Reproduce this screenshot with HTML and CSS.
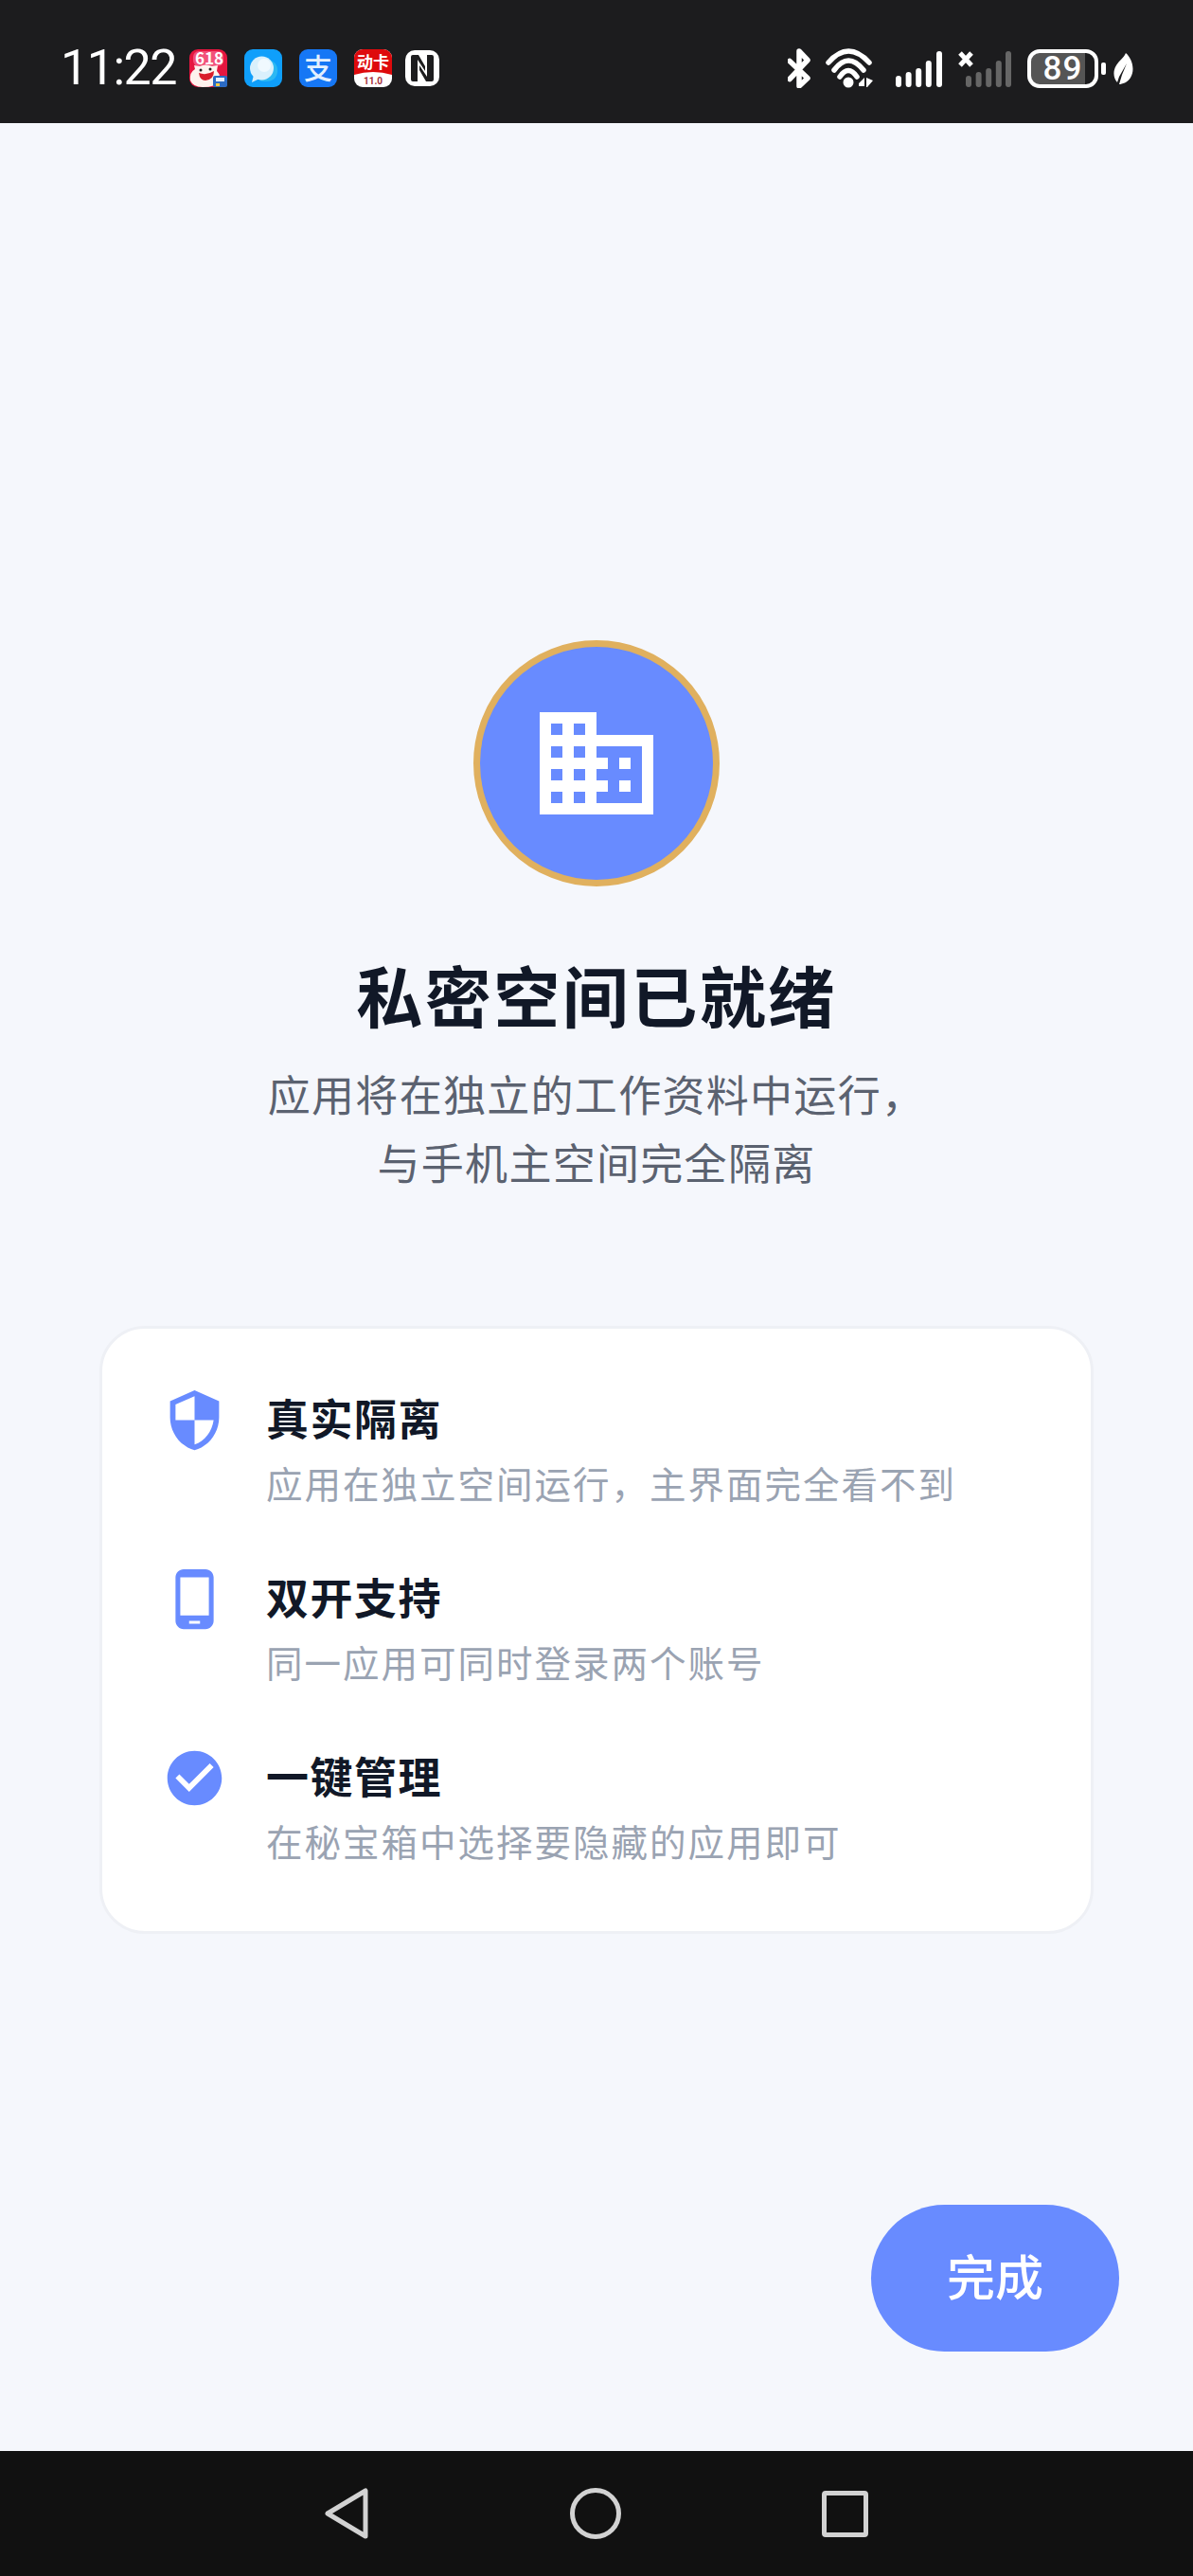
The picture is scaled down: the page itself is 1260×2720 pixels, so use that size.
FILE: index.html
```html
<!DOCTYPE html>
<html lang="zh-CN">

<head>
    <meta charset="UTF-8">
    <meta name="viewport" content="width=device-width, initial-scale=1.0">
    <title>私密空间已就绪</title>
    <link rel="stylesheet" href="styles.css">
</head>

<body>
    <!-- Status bar -->
    <header class="status-bar">
        <div class="status-left">
            <span class="clock">11:22</span>
            <svg class="app-icon" viewBox="0 0 40 40">
                <rect width="40" height="40" rx="9" fill="#e5163f" />
                <rect x="4" y="2" width="32" height="16" rx="6" fill="#f2527a" />
                <text x="21" y="16" class="icon-text" font-size="17" fill="#fff" text-anchor="middle">618</text>
                <path d="M1 33 Q0 24 6 21 L5 17 L11 18 Q17 15 24 18 L30 17 L29 23 Q34 28 31 34 Q28 40 14 40 Q4 40 1 33 Z" fill="#fdf3ee" />
                <path d="M10 25 Q18 28 26 23 Q26 32 17 33 Q11 33 10 25 Z" fill="#d91c2a" />
                <circle cx="12" cy="22" r="1.5" fill="#222" />
                <circle cx="22" cy="21" r="1.5" fill="#222" />
                <rect x="25" y="28" width="15" height="12" rx="2" fill="#2c6bc4" />
                <rect x="28" y="30" width="9" height="4" fill="#e8f0fb" />
                <rect x="28" y="36" width="4" height="3" fill="#f6c945" />
            </svg>
            <svg class="app-icon" viewBox="0 0 40 40">
                <rect width="40" height="40" rx="9" fill="#0f9ffb" />
                <path d="M22 10 Q36 12 35 24 Q34 34 22 34 Q18 34 16 33 Z" fill="#2cb8f3" />
                <path d="M8 35 L10 27 L16 31 Z" fill="#d6effc" />
                <circle cx="18.5" cy="20" r="12.5" fill="#d9f0fc" />
                <circle cx="21" cy="17" r="7" fill="#f0f9fe" />
            </svg>
            <svg class="app-icon" viewBox="0 0 40 40">
                <rect width="40" height="40" rx="9" fill="#1677f5" />
                <text x="20" y="31" class="icon-text-light" font-size="30" fill="#e3f0fe" text-anchor="middle">支</text>
            </svg>
            <svg class="app-icon" viewBox="0 0 40 40">
                <rect width="40" height="40" rx="9" fill="#fff" />
                <path d="M0 9a9 9 0 0 1 9-9h22a9 9 0 0 1 9 9v18q-20 -6-40 0z" fill="#de0a0c" />
                <text x="20" y="20" class="icon-text" font-size="17" fill="#fff" text-anchor="middle">动卡</text>
                <text x="20" y="37" class="icon-num" font-size="10" fill="#a5323c" text-anchor="middle">11.0</text>
            </svg>
            <svg class="nfc-icon" viewBox="0 0 36 38">
                <rect width="36" height="38" rx="10" fill="#fff" />
                <path d="M6 7 Q6 5 8 5 H14 L21 17 V22 L13 10 V33 H8 Q6 33 6 31 Z" fill="#1c1c1e" />
                <path d="M6 7 Q6 5 8 5 H14 L21 17 V22 L13 10 V33 H8 Q6 33 6 31 Z" fill="#1c1c1e" transform="rotate(180 18 19)" />
            </svg>
        </div>
        <div class="status-right">
            <svg class="bt-icon" viewBox="0 0 24 42">
                <path d="M2 13.5 L21 31.5 L12 40 V3 L21 12.5 L2 32.5" fill="none" stroke="#fff" stroke-width="5.5" stroke-linejoin="round" stroke-linecap="round" />
            </svg>
            <svg class="wifi-icon" viewBox="0 0 50 42">
                <g fill="none" stroke="#fff" stroke-width="5.5" stroke-linecap="round">
                    <path d="M3 15 Q24 -9 46 15" />
                    <path d="M9 23 Q24 3 40 23" />
                    <path d="M15 30 Q24 17 33 30" />
                </g>
                <circle cx="24" cy="36" r="5.5" fill="#fff" />
                <path d="M35 37 L41 31 V40 H35 Z M43 31 L50 34 L44 41 H43 Z" fill="#fff" />
            </svg>
            <svg class="signal-icon" viewBox="0 0 50 42">
                <g fill="#fff">
                    <rect x="0" y="29" width="6" height="12" rx="3" />
                    <rect x="10.6" y="25" width="6" height="16" rx="3" />
                    <rect x="21.2" y="21" width="6" height="20" rx="3" />
                    <rect x="31.8" y="13" width="6" height="28" rx="3" />
                    <rect x="43" y="3" width="6" height="38" rx="3" />
                </g>
            </svg>
            <svg class="signal-off-icon" viewBox="0 0 57 42">
                <g fill="#666">
                    <rect x="8" y="29" width="6" height="12" rx="3" />
                    <rect x="18.6" y="25" width="6" height="16" rx="3" />
                    <rect x="29.2" y="21" width="6" height="20" rx="3" />
                    <rect x="39.8" y="13" width="6" height="28" rx="3" />
                    <rect x="50" y="3" width="6" height="38" rx="3" />
                </g>
                <path d="M2 5 L14 18 M14 5 L2 18" stroke="#fff" stroke-width="5" />
            </svg>
            <div class="battery">
                <div class="battery-body">89</div>
                <div class="battery-nub"></div>
            </div>
            <svg class="leaf-icon" viewBox="0 0 21 33">
                <path d="M13 0 C20 6 23 18 18 26 C15 31 9 33 6 33 L9 23 L14 11 L6 25 L4 31 C0 27 -1 19 3 13 C6 8 11 5 13 0 Z" fill="#fff" />
            </svg>
        </div>
    </header>

    <!-- Main content -->
    <main class="page">
        <div class="hero-badge">
            <svg class="hero-icon" viewBox="0 0 24 24">
                <path d="M12 7V3H2v18h20V7H12zM6 19H4v-2h2v2zm0-4H4v-2h2v2zm0-4H4V9h2v2zm0-4H4V5h2v2zm4 12H8v-2h2v2zm0-4H8v-2h2v2zm0-4H8V9h2v2zm0-4H8V5h2v2zm10 12h-8v-2h2v-2h-2v-2h2v-2h-2V9h8v10zm-2-8h-2v2h2v-2zm0 4h-2v2h2v-2z" fill="#fff" />
            </svg>
        </div>
        <h1 class="title">私密空间已就绪</h1>
        <p class="subtitle">应用将在独立的工作资料中运行，<br>与手机主空间完全隔离</p>

        <section class="feature-card">
            <div class="feature-row">
                <svg class="feature-icon" viewBox="0 0 24 24">
                    <path d="M12 1L3 5v6c0 5.55 3.84 10.74 9 12 5.16-1.26 9-6.45 9-12V5l-9-4zm0 10.99h7c-.53 4.12-3.28 7.79-7 8.94V12H5V6.3l7-3.11v8.8z" />
                </svg>
                <div>
                    <h2 class="feature-title">真实隔离</h2>
                    <p class="feature-text">应用在独立空间运行，主界面完全看不到</p>
                </div>
            </div>
            <div class="feature-row">
                <svg class="feature-icon" viewBox="0 0 24 24">
                    <path d="M16 1H8C6.34 1 5 2.34 5 4v16c0 1.66 1.34 3 3 3h8c1.66 0 3-1.34 3-3V4c0-1.66-1.34-3-3-3zm-2 20h-4v-1h4v1zm3.25-3H6.75V4h10.5v14z" />
                </svg>
                <div>
                    <h2 class="feature-title">双开支持</h2>
                    <p class="feature-text">同一应用可同时登录两个账号</p>
                </div>
            </div>
            <div class="feature-row">
                <svg class="feature-icon" viewBox="0 0 24 24">
                    <path d="M12 2C6.48 2 2 6.48 2 12s4.48 10 10 10 10-4.48 10-10S17.52 2 12 2zm-2 15l-5-5 1.41-1.41L10 14.17l7.59-7.59L19 8l-9 9z" />
                </svg>
                <div>
                    <h2 class="feature-title">一键管理</h2>
                    <p class="feature-text">在秘宝箱中选择要隐藏的应用即可</p>
                </div>
            </div>
        </section>

        <button type="button" class="done-btn">完成</button>
    </main>

    <!-- Navigation bar -->
    <footer class="nav-bar">
        <svg class="nav-back" viewBox="0 0 47 54">
            <path d="M3 27 L43 3 V51 Z" fill="none" stroke="#d2d2d2" stroke-width="5" stroke-linejoin="round" />
        </svg>
        <div class="nav-home"></div>
        <div class="nav-recent"></div>
    </footer>
</body>

</html>
```

FILE: styles.css
```css
* {
    box-sizing: border-box;
}

body {
    font-family: "Noto Sans CJK SC", "Noto Sans", sans-serif;
    margin: 0;
    width: 1260px;
    height: 2720px;
    display: flex;
    flex-direction: column;
    background-color: #f5f7fc;
    color: #111827;
}

/* Status bar */
.status-bar {
    height: 130px;
    flex: none;
    display: flex;
    justify-content: space-between;
    align-items: center;
    padding: 14px 63px 0 64px;
    background-color: #1c1c1e;
}

.status-left,
.status-right {
    display: flex;
    align-items: center;
}

.clock {
    width: 121px;
    margin-right: 15px;
    font-family: Roboto, sans-serif;
    font-size: 52px;
    line-height: 44px;
    letter-spacing: -1.5px;
    color: #fff;
}

.app-icon {
    width: 40px;
    height: 40px;
    margin-right: 18px;
    overflow: visible;
}

.icon-text {
    font-family: "Noto Sans CJK SC", sans-serif;
    font-weight: 700;
}

.icon-text-light {
    font-family: "Noto Sans CJK SC", sans-serif;
    font-weight: 500;
}

.icon-num {
    font-family: Roboto, sans-serif;
    font-weight: 700;
}

.nfc-icon {
    width: 36px;
    height: 38px;
    margin-left: -4px;
}

.bt-icon {
    width: 24px;
    height: 42px;
    margin-right: 16px;
}

.wifi-icon {
    width: 50px;
    height: 42px;
    margin-right: 24px;
    overflow: visible;
}

.signal-icon {
    width: 50px;
    height: 42px;
    margin-right: 16px;
}

.signal-off-icon {
    width: 57px;
    height: 42px;
    margin-right: 16px;
}

.battery {
    display: flex;
    align-items: center;
    gap: 3px;
    margin-right: 8px;
}

.battery-body {
    width: 75px;
    height: 41px;
    border: 4px solid #fff;
    border-radius: 13px;
    background: linear-gradient(90deg, #555 0, #555 85%, #1c1c1e 85%);
    font-family: Roboto, sans-serif;
    font-size: 35px;
    font-weight: 500;
    line-height: 33px;
    letter-spacing: 1px;
    text-align: center;
    color: #fff;
}

.battery-nub {
    width: 5px;
    height: 13px;
    border-radius: 2px;
    background-color: #fff;
}

.leaf-icon {
    width: 21px;
    height: 33px;
}

/* Main content */
.page {
    position: relative;
    flex: 1;
    display: flex;
    flex-direction: column;
    align-items: center;
    padding-top: 546px;
}

.hero-badge {
    width: 260px;
    height: 260px;
    display: flex;
    justify-content: center;
    align-items: center;
    border: 7px solid #e0b05e;
    border-radius: 50%;
    background-color: #688bff;
}

.hero-icon {
    width: 144px;
    height: 144px;
}

.title {
    margin: 69px 0 0;
    font-size: 70px;
    font-weight: 700;
    line-height: 90px;
    letter-spacing: 2.5px;
    color: #111827;
}

.subtitle {
    margin: 24px 0 0;
    font-size: 45px;
    line-height: 72px;
    letter-spacing: 1.3px;
    text-align: center;
    color: #5b6270;
}

.feature-card {
    width: 1050px;
    margin-top: 137px;
    padding: 64px 61px 68px 63px;
    display: flex;
    flex-direction: column;
    gap: 63px;
    background-color: #fff;
    border: 3px solid #eef0f5;
    border-radius: 48px;
}

.feature-row {
    display: flex;
    gap: 41px;
}

.feature-icon {
    width: 69px;
    height: 69px;
    flex: none;
    margin-top: -2px;
    fill: #688bff;
}

.feature-title {
    margin: 0;
    font-size: 45px;
    font-weight: 700;
    line-height: 60px;
    letter-spacing: 1.5px;
    color: #111827;
}

.feature-text {
    margin: 10px 0 0;
    font-size: 38.5px;
    line-height: 56px;
    letter-spacing: 2px;
    color: #9aa3b2;
}

.done-btn {
    position: absolute;
    right: 78px;
    bottom: 105px;
    width: 262px;
    height: 155px;
    padding: 0 0 8px;
    border: none;
    border-radius: 78px;
    background-color: #688bff;
    font-family: inherit;
    font-size: 51px;
    font-weight: 500;
    color: #fff;
}

/* Navigation bar */
.nav-bar {
    height: 132px;
    flex: none;
    display: flex;
    align-items: center;
    background-color: #111;
    padding-left: 343px;
}

.nav-back {
    width: 47px;
    height: 54px;
    margin-right: 212px;
}

.nav-home {
    width: 54px;
    height: 54px;
    margin-right: 212px;
    border: 5px solid #d2d2d2;
    border-radius: 50%;
}

.nav-recent {
    width: 49px;
    height: 49px;
    border: 5px solid #d2d2d2;
    border-radius: 4px;
}
```
